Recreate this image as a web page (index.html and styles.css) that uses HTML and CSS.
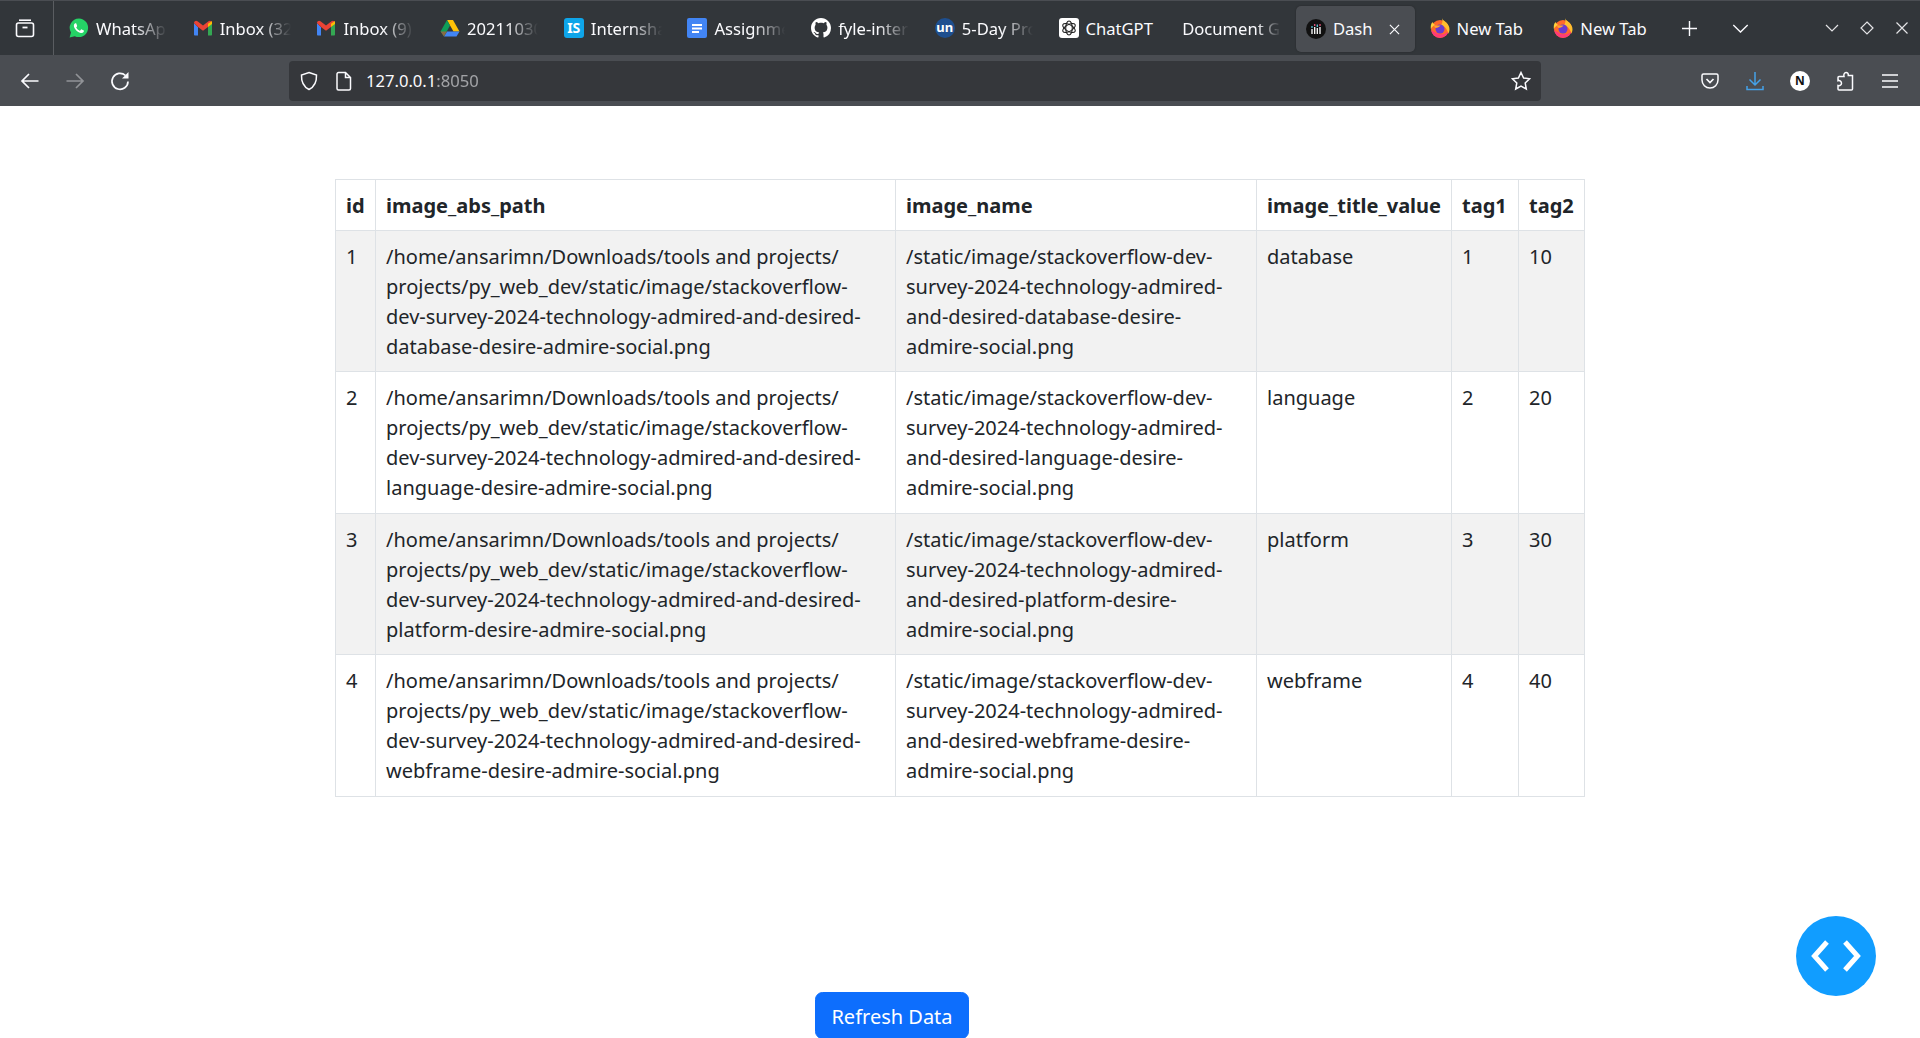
FILE: index.html
```html
<!DOCTYPE html>
<html lang="en">
<head>
<meta charset="utf-8">
<title>Dash</title>
<link rel="stylesheet" href="styles.css">
</head>
<body>
<header class="browser">
  <div class="tabstrip">
    <div class="tabs-menu">
      <svg class="ic20" viewBox="0 0 20 20" fill="none" stroke="#fbfbfe" stroke-width="1.6"><path d="M4 2.2h12"/><rect x="1.5" y="5" width="17" height="13.5" rx="2"/><path d="M7.5 9.5h5" stroke-width="1.8"/></svg>
    </div>
    <div class="tab"><svg class="fav" viewBox="0 0 20 20"><path fill="#25d366" d="M10 .5a9.3 9.3 0 0 0-8 14L.6 19.5l5.2-1.3A9.3 9.3 0 1 0 10 .5z"/><path fill="#fff" d="M6.8 5.2c-.3 0-.8.1-1.2.6-.9 1-1 2.500-.1 4.200 1.200 2.200 3.100 4 5.500 4.800 1.500.5 2.900.2 3.600-.9.3-.5.4-1.100.3-1.400l-2.200-1.100c-.3-.1-.5 0-.7.200l-.8 1c-.2.200-.4.200-.6.100-1.400-.6-2.500-1.600-3.300-2.900-.1-.2-.1-.4.100-.6l.6-.8c.1-.2.200-.4.100-.6L7.300 5.500c-.1-.2-.3-.3-.5-.3z"/></svg><span class="tab-label fade">WhatsApp</span></div>
    <div class="tab"><svg class="fav" viewBox="0 0 20 20"><use href="#gmail"/></svg><span class="tab-label fade">Inbox (32)</span></div>
    <div class="tab"><svg class="fav" viewBox="0 0 20 20"><symbol id="gmail" viewBox="0 0 20 20"><path fill="#4285f4" d="M1 5v11.500c0 .6.500 1 1 1h3V9z"/><path fill="#34a853" d="M15 9v8.500h3c.6 0 1-.4 1-1V5z"/><path fill="#ea4335" d="M1 5l4 4 5 3.800L15 9l4-4c0-2-2-3-3.500-1.800L10 7.500 4.500 3.200C3 2 1 3 1 5z"/><path fill="#c5221f" d="M1 5l4 3.200V9z"/><path fill="#fbbc04" d="M15 5.700L19 3v3l-4 3z"/></symbol><use href="#gmail"/></svg><span class="tab-label fade">Inbox (9)</span></div>
    <div class="tab"><svg class="fav" viewBox="0 0 20 20"><path fill="#ffc107" d="M7 2h6l6.500 11.500h-6z"/><path fill="#4285f4" d="M4 18.500l3-5h12.500l-3 5z"/><path fill="#0f9d58" d="M7 2L.5 13.500 4 18.500 10 7.500z"/><path fill="#ea4335" d="M7 13.500l-3 5-3.500-5z" opacity=".55"/></svg><span class="tab-label fade">20211030_report</span></div>
    <div class="tab"><span class="fav-is">IS</span><span class="tab-label fade">Internshala</span></div>
    <div class="tab"><svg class="fav" viewBox="0 0 20 20"><rect width="20" height="20" rx="2" fill="#4285f4"/><path fill="#fff" d="M5 6h10v2H5zM5 9.500h10v2H5zM5 13h7v2H5z"/></svg><span class="tab-label fade">Assignment</span></div>
    <div class="tab"><svg class="fav" viewBox="0 0 16 16"><path fill="#fff" d="M8 0C3.580 0 0 3.580 0 8c0 3.540 2.290 6.530 5.470 7.590.4.070.55-.17.55-.38 0-.19-.010-.82-.010-1.490-2.010.37-2.530-.49-2.690-.94-.09-.23-.48-.94-.82-1.130-.28-.15-.68-.52-.010-.53.63-.010 1.080.58 1.230.82.720 1.210 1.870.87 2.330.66.070-.52.280-.87.510-1.070-1.780-.2-3.640-.89-3.640-3.950 0-.87.310-1.590.820-2.150-.080-.2-.360-1.020.080-2.120 0 0 .670-.210 2.200.820.640-.180 1.320-.270 2-.270s1.360.090 2 .270c1.530-1.040 2.200-.820 2.200-.820.440 1.100.160 1.920.080 2.120.510.560.820 1.270.820 2.150 0 3.070-1.870 3.750-3.650 3.950.290.250.540.730.540 1.480 0 1.070-.010 1.930-.010 2.200 0 .210.150.460.550.380A8.010 8.010 0 0 0 16 8c0-4.420-3.580-8-8-8z"/></svg><span class="tab-label fade">fyle-internship</span></div>
    <div class="tab"><span class="fav-un">un</span><span class="tab-label fade">5-Day Project</span></div>
    <div class="tab"><span class="fav-gpt"><svg viewBox="0 0 20 20" fill="none" stroke="#222" stroke-width="1.100"><ellipse cx="10" cy="10" rx="3.300" ry="7"/><ellipse cx="10" cy="10" rx="3.300" ry="7" transform="rotate(60 10 10)"/><ellipse cx="10" cy="10" rx="3.300" ry="7" transform="rotate(120 10 10)"/></svg></span><span class="tab-label">ChatGPT</span></div>
    <div class="tab"><span class="tab-label wide fade-late">Document Generator</span></div>
    <div class="tab tab-active">
      <div class="tab-box">
        <svg class="fav" viewBox="0 0 20 20"><circle cx="10" cy="10" r="10" fill="#111"/><path stroke="#fff" stroke-width="1.300" d="M6 10v5M8.700 8v7M11.300 9v6M14 8v7"/><path stroke="#e5527a" stroke-width="1.300" d="M8.700 5v2M14 5v2"/><path stroke="#5ec7d8" stroke-width="1.300" d="M6 7v2M11.300 5.500V8"/></svg>
        <span class="tab-label short">Dash</span>
        <svg class="tab-close" viewBox="0 0 12 12" fill="none" stroke="#fbfbfe" stroke-width="1.300"><path d="M1 1l10 10M11 1L1 11"/></svg>
      </div>
    </div>
    <div class="tab"><svg class="fav" viewBox="0 0 20 20"><use href="#ff"/></svg><span class="tab-label">New Tab</span></div>
    <div class="tab"><svg class="fav" viewBox="0 0 20 20"><symbol id="ff" viewBox="0 0 20 20"><circle cx="10" cy="11" r="9" fill="#ff6a2b"/><path fill="#ff3a78" d="M1.200 12a8.900 8.900 0 0 0 17.500 1c-3 4-10 4.500-13.500 1.200C3.500 13.500 2.300 12.800 1.200 12z"/><path fill="#ffbe2e" d="M12 0c.5 3 6 4 7.300 9.500.6 2.800-.3 5-1 6.200-.6-4-3.800-7.800-7.300-8.700 2-2 1.500-5 1-7z"/><path fill="#ffd13b" d="M2.500 4C.8 6 .5 8.500.9 11c.8-1.700 2.100-3 4.100-4C4 6 3 5.500 2.500 4z"/><circle cx="10" cy="11" r="4.500" fill="#6a3bd0"/><path fill="#ffa52e" d="M3.500 7.500h7c-1 1.300-3 2.500-5 2.500z"/></symbol><use href="#ff"/></svg><span class="tab-label">New Tab</span></div>
    <div class="strip-actions">
      <svg class="plus" viewBox="0 0 16 16" fill="none" stroke="#fbfbfe" stroke-width="1.500"><path d="M8 0v16M0 8h16"/></svg>
      <svg class="chev" viewBox="0 0 18 10" fill="none" stroke="#fbfbfe" stroke-width="1.500"><path d="M1 1l8 8 8-8"/></svg>
    </div>
    <div class="win-controls">
      <svg class="w14" viewBox="0 0 14 14" fill="none" stroke="#e4e4e6" stroke-width="1.200"><path d="M1 4l6 6 6-6"/></svg>
      <svg class="w14" viewBox="0 0 14 14" fill="none" stroke="#e4e4e6" stroke-width="1.200"><path d="M7 1l6 6-6 6-6-6z"/></svg>
      <svg class="w14" viewBox="0 0 14 14" fill="none" stroke="#e4e4e6" stroke-width="1.200"><path d="M1.500 1.500l11 11M12.500 1.500l-11 11"/></svg>
    </div>
  </div>
  <div class="toolbar">
    <div class="nav-buttons">
      <svg class="ic20" viewBox="0 0 20 20" fill="none" stroke="#fbfbfe" stroke-width="1.700"><path d="M18.500 10H2M9 3l-7 7 7 7"/></svg>
      <svg class="ic20 disabled" viewBox="0 0 20 20" fill="none" stroke="#fbfbfe" stroke-width="1.700"><path d="M1.500 10H18M11 3l7 7-7 7"/></svg>
      <svg class="ic20" viewBox="0 0 20 20" fill="none"><path stroke="#fbfbfe" stroke-width="1.700" d="M15.500 4.500A8 8 0 1 0 18 10.500"/><path fill="#fbfbfe" d="M18.500 1v6.500H12z"/></svg>
    </div>
    <div class="urlbar">
      <svg class="ic20" viewBox="0 0 20 20" fill="none" stroke="#fbfbfe" stroke-width="1.500"><path d="M10 1.500l7.500 2.500c.3 7-1.500 11.500-7.500 14.500C4 15.500 2.200 11 2.500 4z"/></svg>
      <svg class="ic18" viewBox="0 0 16 20" fill="none" stroke="#fbfbfe" stroke-width="1.500"><path d="M2.500 1.500h7l5 5v11a1.500 1.500 0 0 1-1.500 1.500H2.500A1.500 1.500 0 0 1 1 17.500V3a1.500 1.500 0 0 1 1.500-1.500zM9.500 1.500v5h5"/></svg>
      <span class="url">127.0.0.1<span class="dim">:8050</span></span>
      <svg class="ic20 star" viewBox="0 0 20 20" fill="none" stroke="#fbfbfe" stroke-width="1.500"><path d="M10 1.500l2.600 5.500 6 .8-4.400 4.200 1.100 6L10 15.100 4.700 18l1.100-6L1.400 7.800l6-.8z"/></svg>
    </div>
    <div class="tool-icons">
      <svg class="ic20" viewBox="0 0 20 20" fill="none" stroke="#fbfbfe" stroke-width="1.500"><path d="M3.500 3h13A1.500 1.500 0 0 1 18 4.500V9a8 8 0 0 1-16 0V4.500A1.500 1.500 0 0 1 3.500 3z"/><path d="M6.500 8l3.500 3.500L13.500 8" stroke-width="1.700"/></svg>
      <svg class="ic20" viewBox="0 0 20 20" fill="none" stroke="#45a1e8" stroke-width="1.500"><path d="M10 1v12.500M4.500 8.500l5.500 5.500 5.500-5.500"/><path d="M2 15v3.500h16V15"/></svg>
      <span class="notion">N</span>
      <svg class="ic20" viewBox="0 0 20 20" fill="none" stroke="#fbfbfe" stroke-width="1.500"><path d="M11 1.500c1.600 0 2.500 1.200 2.300 3H17.500v13.500A1 1 0 0 1 16.500 19H4a1 1 0 0 1-1-1v-3.500c2 .5 3.500-.5 3.500-2.300S5 9.200 3 9.700V6.500a1 1 0 0 1 1-1h5c-.6-2 .4-4 2-4z"/></svg>
      <svg class="ic20" viewBox="0 0 20 20" fill="none" stroke="#fbfbfe" stroke-width="1.700"><path d="M2 4h16M2 10h16M2 16h16"/></svg>
    </div>
  </div>
</header>

<main class="page">
  <table class="data">
    <colgroup><col class="c1"><col class="c2"><col class="c3"><col class="c4"><col class="c5"><col class="c6"></colgroup>
    <thead>
      <tr><th>id</th><th>image_abs_path</th><th>image_name</th><th>image_title_value</th><th>tag1</th><th>tag2</th></tr>
    </thead>
    <tbody>
      <tr class="odd"><td>1</td><td>/home/ansarimn/Downloads/tools and projects/<wbr>projects/py_web_dev/static/image/stackoverflow-dev-survey-2024-technology-admired-and-desired-database-desire-admire-social.png</td><td>/static/image/stackoverflow-dev-survey-2024-technology-admired-and-desired-database-desire-admire-social.png</td><td>database</td><td>1</td><td>10</td></tr>
      <tr><td>2</td><td>/home/ansarimn/Downloads/tools and projects/<wbr>projects/py_web_dev/static/image/stackoverflow-dev-survey-2024-technology-admired-and-desired-language-desire-admire-social.png</td><td>/static/image/stackoverflow-dev-survey-2024-technology-admired-and-desired-language-desire-admire-social.png</td><td>language</td><td>2</td><td>20</td></tr>
      <tr class="odd"><td>3</td><td>/home/ansarimn/Downloads/tools and projects/<wbr>projects/py_web_dev/static/image/stackoverflow-dev-survey-2024-technology-admired-and-desired-platform-desire-admire-social.png</td><td>/static/image/stackoverflow-dev-survey-2024-technology-admired-and-desired-platform-desire-admire-social.png</td><td>platform</td><td>3</td><td>30</td></tr>
      <tr><td>4</td><td>/home/ansarimn/Downloads/tools and projects/<wbr>projects/py_web_dev/static/image/stackoverflow-dev-survey-2024-technology-admired-and-desired-webframe-desire-admire-social.png</td><td>/static/image/stackoverflow-dev-survey-2024-technology-admired-and-desired-webframe-desire-admire-social.png</td><td>webframe</td><td>4</td><td>40</td></tr>
    </tbody>
  </table>
  <button class="refresh" type="button">Refresh Data</button>
</main>

<div class="widget">
  <svg viewBox="0 0 80 80" class="widget-icon" fill="none" stroke="#fff" stroke-width="5"><path d="M31 26L18.500 40 31 54M49 26l12.500 14L49 54"/></svg>
</div>
</body>
</html>
```

FILE: styles.css
```css
* { box-sizing: border-box; }
html, body { margin: 0; height: 1038px; overflow: hidden; background: #fff; }
body { font-family: "Noto Sans", sans-serif; color: #212529; position: relative; }
svg { display: block; flex: none; }

.browser { color: #fbfbfe; }
.tabstrip { display: flex; align-items: center; height: 55px; background: #32363a; border-top: 1px solid #4a4d52; }
.tabs-menu { width: 54px; height: 54px; display: flex; align-items: center; padding-left: 15px; border-right: 1px solid #5a5d61; margin-right: 1px; flex: none; }
.ic20 { width: 20px; height: 20px; }
.ic18 { width: 16px; height: 20px; }
.tab { flex: none; width: 123.7px; height: 54px; padding-left: 14px; display: flex; align-items: center; gap: 7px; font-size: 16.6px; white-space: nowrap; }
.tab-active { width: 127px; margin-right: -3.300px; padding: 5px 4px 3px; }
.tab-box { width: 100%; height: 100%; background: #4a4d52; border-radius: 5px; display: flex; align-items: center; padding-left: 10px; gap: 7px; box-shadow: 0 0 2px rgba(0,0,0,.3); }
.fav { width: 20px; height: 20px; flex: none; }
.tab-label { display: block; width: 71px; overflow: hidden; padding-top: 1px; }
.tab-label.wide { width: 99px; }
.tab-label.short { width: 49px; padding-top: 0; margin-top: -1px; }
.tab-label.fade { -webkit-mask-image: linear-gradient(to right, #000 55%, transparent 100%); mask-image: linear-gradient(to right, #000 55%, transparent 100%); }
.tab-label.fade-late { -webkit-mask-image: linear-gradient(to right, #000 75%, transparent 100%); mask-image: linear-gradient(to right, #000 75%, transparent 100%); }
.dim { opacity: .55; }
.tab-close { width: 11px; height: 11px; }
.fav-is { width: 20px; height: 20px; flex: none; border-radius: 3px; background: #0ea5e9; color: #fff; font-size: 14px; font-weight: 700; line-height: 20px; text-align: center; }
.fav-un { width: 20px; height: 20px; flex: none; border-radius: 50%; background: #1e4f8f; color: #fff; font-size: 13px; font-weight: 700; line-height: 18px; text-align: center; }
.fav-gpt { width: 20px; height: 20px; flex: none; background: #fff; border-radius: 3px; display: block; }
.strip-actions { display: flex; align-items: center; margin-left: 19px; gap: 35px; }
.plus { width: 15px; height: 15px; }
.chev { width: 17px; height: 9px; }
.win-controls { display: flex; align-items: center; gap: 21px; margin-left: auto; margin-right: 11px; }
.w14 { width: 14px; height: 14px; }

.toolbar { height: 51px; background: #4a4d52; display: flex; align-items: center; }
.nav-buttons { display: flex; gap: 25px; padding-left: 20px; width: 289px; flex: none; }
.disabled { opacity: .4; }
.urlbar { width: 1252px; flex: none; height: 40px; background: #35373b; border-radius: 4px; display: flex; align-items: center; padding: 0 10px 0 10px; gap: 17px; }
.url { font-size: 16.6px; margin-left: -3px; }
.star { margin-left: auto; }
.tool-icons { display: flex; align-items: center; gap: 25px; margin-left: 159px; }
.notion { width: 20px; height: 20px; border-radius: 50%; background: #fff; color: #111; font-size: 12px; font-weight: 700; line-height: 20px; text-align: center; }

.page { padding: 73px 0 0 335px; }
.data { border-collapse: collapse; table-layout: fixed; width: 1249px; font-size: 20px; line-height: 30px; color: #212529; }
.data th, .data td { border: 1px solid #dee2e6; padding: 11px 10px 9px; text-align: left; vertical-align: top; }
.data td { padding-bottom: 9.400px; }
.data th { font-weight: 700; }
.odd td { background: #f2f2f2; }
.c1 { width: 40px; }
.c2 { width: 520px; }
.c3 { width: 361px; }
.c4 { width: 195px; }
.c5 { width: 67px; }
.c6 { width: 66px; }

.refresh { display: block; margin: 195px 0 0 480px; width: 154px; height: 47px; border: 1px solid #0d6efd; border-radius: 7.500px; background: #0d6efd; color: #fff; font: 400 20px/30px "Noto Sans", sans-serif; padding: 9px 15px 6px; }

.widget { position: absolute; left: 1796px; top: 916px; width: 80px; height: 80px; border-radius: 50%; background: #119dff; }
.widget-icon { width: 80px; height: 80px; }
```
